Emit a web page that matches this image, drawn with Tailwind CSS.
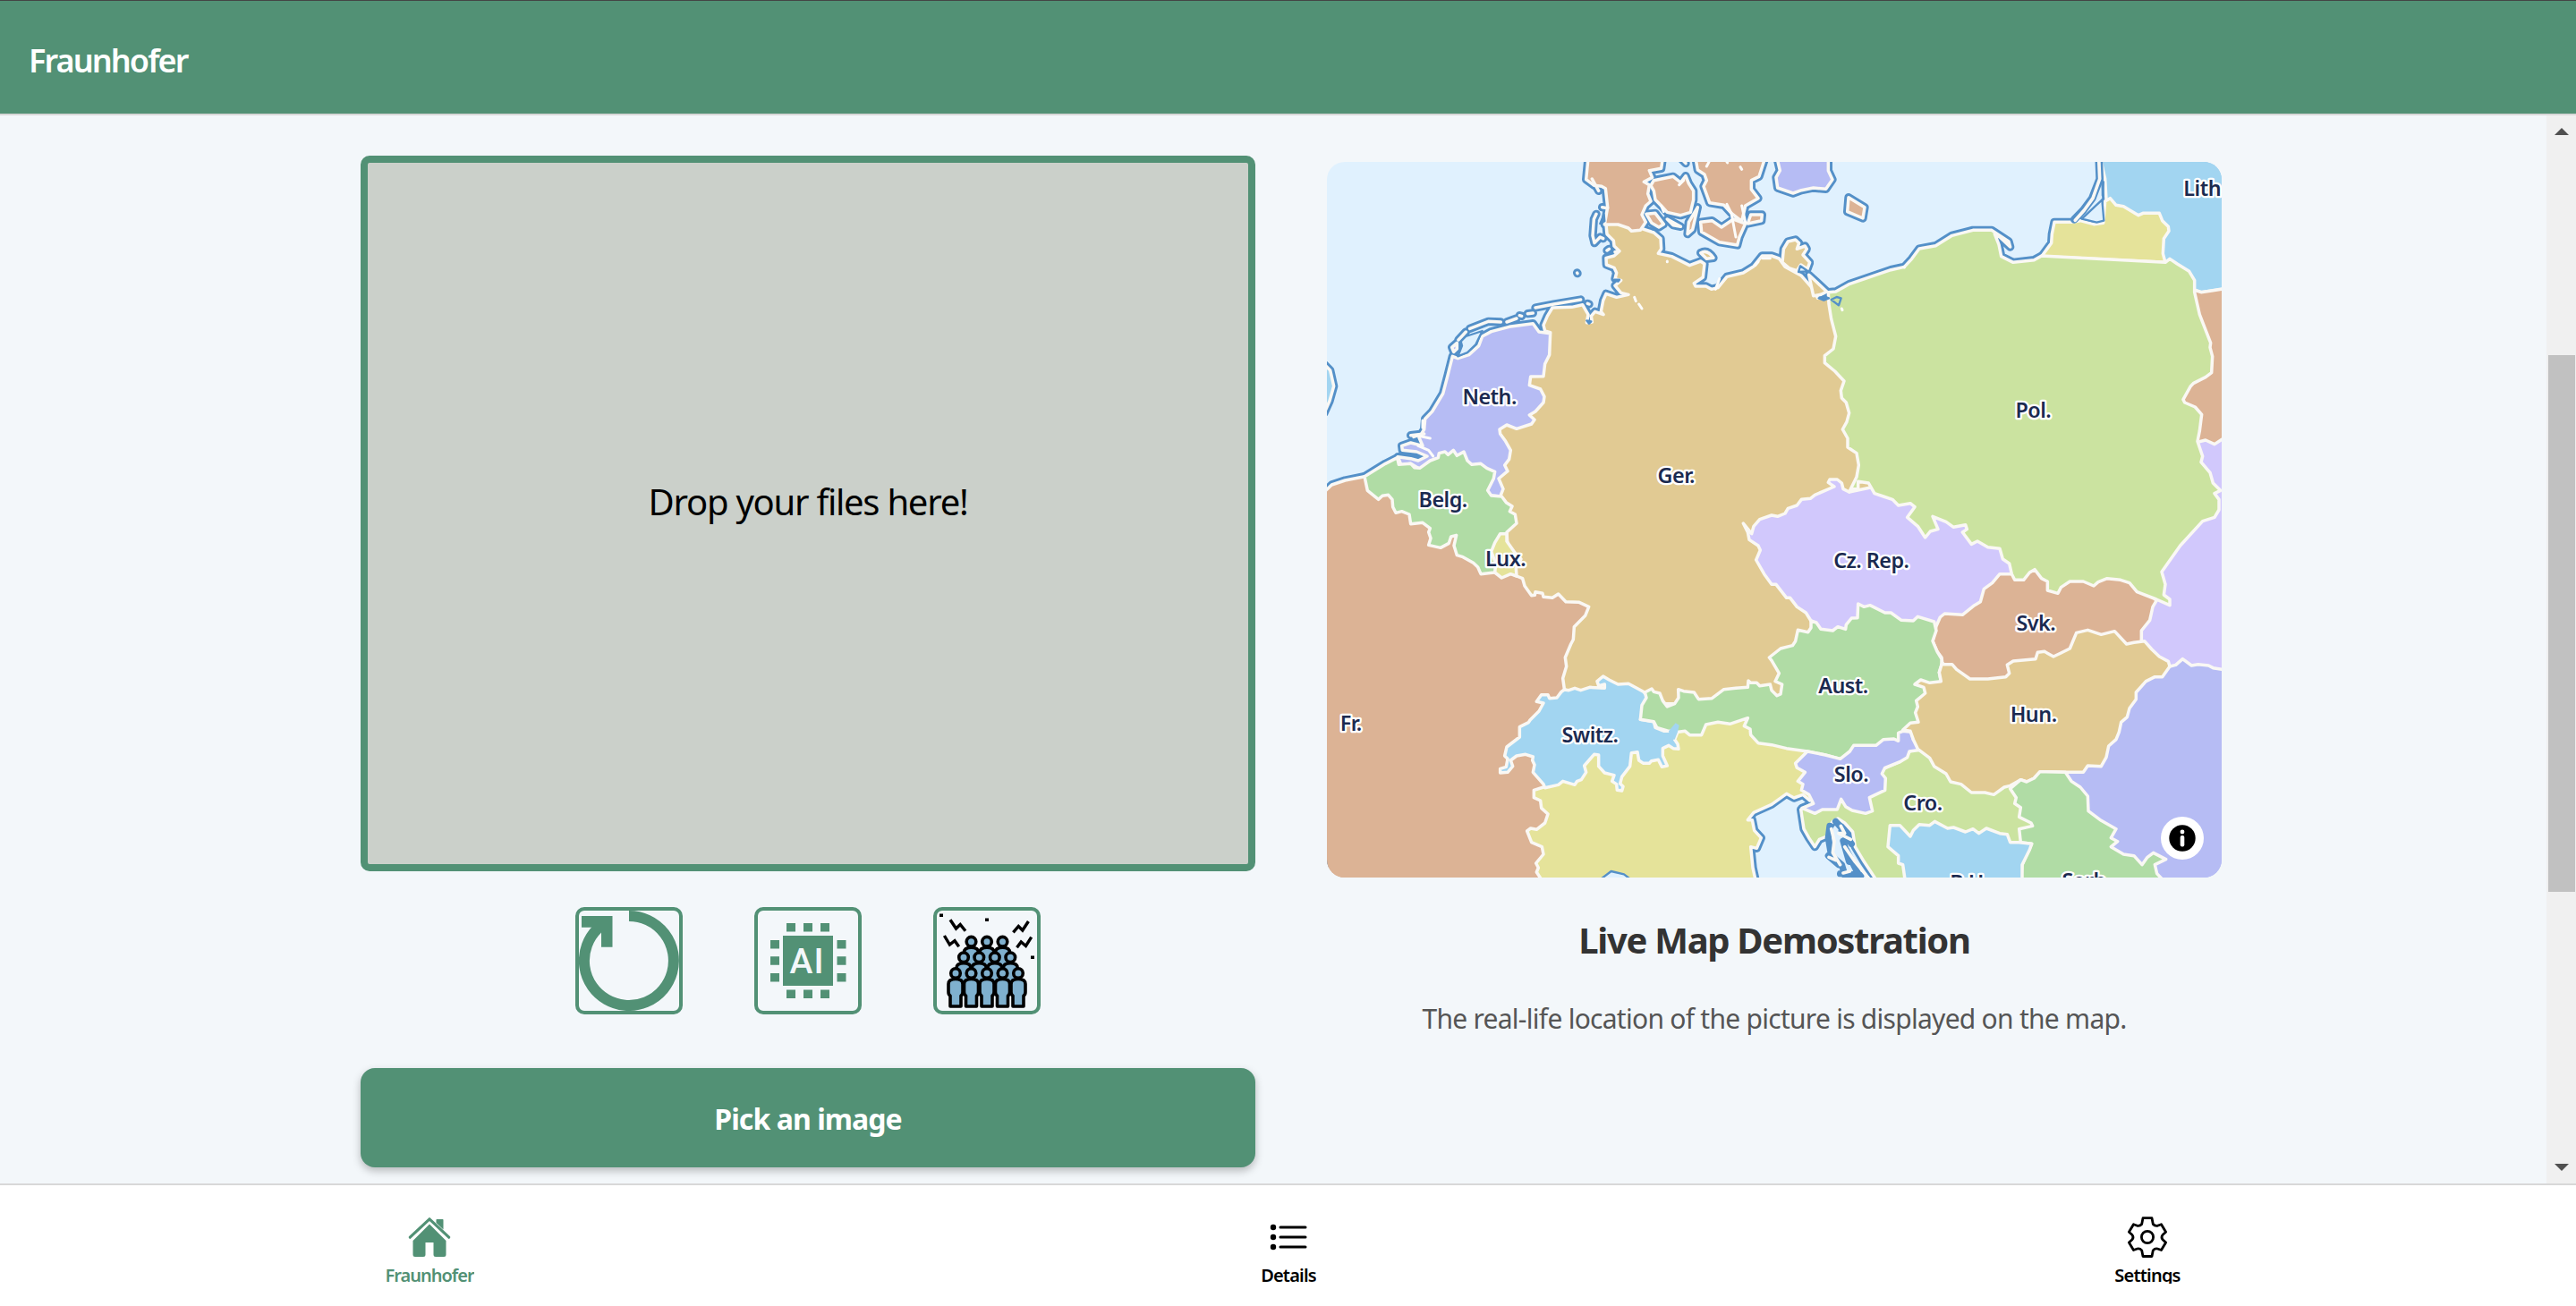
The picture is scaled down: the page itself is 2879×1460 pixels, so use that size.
<!DOCTYPE html>
<html lang="en">
<head>
<meta charset="utf-8">
<title>Fraunhofer</title>
<script src="https://cdn.jsdelivr.net/npm/@tailwindcss/browser@4"></script>
</head>
<body class="h-[1460px] w-full overflow-hidden flex flex-col bg-[#f3f7fa] font-['Noto_Sans','Open_Sans',sans-serif] text-black">

<header class="h-[129px] shrink-0 flex items-center bg-[#529175] border-t border-t-[#444] border-b-2 border-b-[#d8d8d8] pl-8 pt-2">
  <h1 class="text-[36px] leading-[48px] font-semibold text-white tracking-[-1.9px]">Fraunhofer</h1>
</header>

<main class="h-[1194px] shrink-0 flex overflow-hidden">
  <div class="flex-1 flex gap-20 pl-[403px]">
    <section class="w-[1000px] pt-[45px] flex flex-col">
      <div class="h-[800px] border-8 border-[#529175] rounded-[10px] bg-[#cbd0ca] flex items-center justify-center pb-[27px]">
        <p class="text-[40px] leading-[52px] tracking-[-1.25px]">Drop your files here!</p>
      </div>

      <div class="mt-10 flex justify-center gap-20">
        <button class="size-[120px] rounded-[10px] border-4 border-[#529175]">
          <svg class="size-28" viewBox="4 4 112 112" fill="none" aria-label="Reset">
            <path d="M60 10A50 50 0 1 1 24.6 24.6" stroke="#529175" stroke-width="12"/>
            <path d="M7 10H41.5V44.7H29V29L19 22.7H7Z" fill="#529175"/>
          </svg>
        </button>
        <button class="size-[120px] rounded-[10px] border-4 border-[#529175]">
          <svg class="size-28" viewBox="4 4 112 112" fill="#529175" aria-label="AI">
            <path d="M32 32h56v56H32zM36 18h10v9.5H36zM55 18h10v9.5H55zM74 18h10v9.5H74zM36 92.5h10v9.5H36zM55 92.5h10v9.5H55zM74 92.5h10v9.5H74zM18 37h10v9.5H18zM18 55.2h10v9.5H18zM18 74h10v9.5H18zM92.5 37h10v9.5h-10zM92.5 55.2h10v9.5h-10zM92.5 74h10v9.5h-10z"/>
            <text x="39.500" y="74" font-size="39" textLength="38" fill="#f3f7fa" font-weight="500" class="font-[Roboto]">AI</text>
          </svg>
        </button>
        <button class="size-[120px] rounded-[10px] border-4 border-[#529175]">
          <svg class="size-28" viewBox="4 4 112 112" aria-label="Crowd">
            <defs>
              <g id="person">
                <path d="M-8 12C-8 8-5 6.500 0 6.500S8 8 8 12V21Q8 24 6 25V37H-6V25Q-8 24-8 21Z"/>
                <circle r="5.300"/>
              </g>
            </defs>
            <g fill="#7fb0ce" stroke="#000" stroke-width="3.600" stroke-linejoin="round">
              <use href="#person" x="42.500" y="38.700"/><use href="#person" x="77.500" y="38.700"/><use href="#person" x="60" y="38.700"/>
              <use href="#person" x="34" y="56.300"/><use href="#person" x="86.300" y="56.300"/><use href="#person" x="51.300" y="56.300"/><use href="#person" x="68.800" y="56.300"/>
              <use href="#person" x="25" y="74"/><use href="#person" x="95" y="74"/><use href="#person" x="42.500" y="74"/><use href="#person" x="77.500" y="74"/><use href="#person" x="60" y="74"/>
            </g>
            <g fill="none" stroke="#000" stroke-width="3.400">
              <path d="M19 14.300L25.500 24L30.200 19.500L36 26.700M12.400 32L18.400 42L24 37.700L28.700 44.300M106.400 16L99.800 26L95.300 21.500L89.400 28.300M109.700 33.700L103.500 43.500L98.200 39L93.500 45.300"/>
            </g>
            <path d="M7 7.500h4v3.500H7zM58 12.500h4V16h-4zM109 54.500h4V58h-4z"/>
          </svg>
        </button>
      </div>

      <button class="mt-[60px] h-[111px] rounded-2xl bg-[#529175] pt-0.5 text-[32px] leading-[44px] font-bold text-white tracking-[-0.95px] shadow-[0_4px_10px_rgba(0,0,0,0.25)]">Pick an image</button>
    </section>

    <section class="w-[1000px] pt-[52px] flex flex-col">
      <div class="relative h-[800px] shrink-0 rounded-[20px] overflow-hidden bg-[#e0f1fe]">
        <svg class="block w-full h-full" viewBox="9 33 3000 2400" stroke-linejoin="round" stroke-linecap="round">
          <defs>
            <g id="lands">
              <!-- Germany -->
              <path fill="#e1ca93" d="M945 243L948 275L970 297L972 315L990 332L972 348L945 355L946 378L972 388L980 405L975 425L995 430L975 448L995 472L1020 478L980 487L945 475L935 498L928 535L936 545L908 535L895 550L898 570L880 572L885 545L866 512L830 520L765 522L748 550L735 580L740 600L758 605L600 700L500 1200L800 1850L1100 1900L1500 1900L1900 1700L1900 900L1690 492L1655 490L1635 455L1600 415L1545 385L1525 357L1500 348L1468 348L1440 383L1405 405L1350 418L1320 455L1298 460L1280 450L1245 450L1240 440L1270 420L1275 375L1262 366L1225 380L1165 350L1120 340L1130 325L1128 290L1105 270L1060 255L1000 235Z"/>
              <path fill="#e1ca93" d="M1262 338Q1285 325 1305 355L1282 358Z"/>
              <path fill="#e1ca93" d="M1536 370L1540 325L1555 300L1580 294L1592 305L1585 325L1612 315L1618 325L1605 345L1628 370L1620 392L1598 378L1585 398L1560 390Z"/>
              <path fill="#e1ca93" d="M1625 412L1650 435L1685 468L1665 478L1640 482Z"/>
              <!-- Denmark -->
              <path fill="#dcb395" d="M885 20L878 92L905 112L930 115L943 122L950 185L940 243L985 243L1020 255L1030 265L1060 262L1078 235L1065 210L1078 180L1095 165L1085 140L1090 110L1072 100L1100 85L1090 62L1130 55L1135 20Z"/>
              <path fill="#dcb395" d="M1105 95L1170 82L1195 102L1212 80L1222 105L1238 130L1238 160L1228 202L1195 212L1150 202L1132 182L1110 160L1105 130L1095 112Z"/>
              <path fill="#dcb395" d="M1245 20L1252 60L1275 75L1282 95L1272 115L1292 170L1340 178L1365 205L1400 232L1412 180L1455 155L1432 125L1432 95L1458 82L1478 20ZM1262 235L1300 230L1332 252L1372 225L1412 240L1392 285L1385 312L1325 302L1265 268ZM1430 210H1468L1466 230L1420 240ZM1080 208L1110 205L1138 242L1122 252L1098 238Z"/>
              <path fill="#dcb395" d="M1218 275L1222 235L1252 185L1235 260ZM1150 225L1195 250L1170 245ZM1195 20L1212 38L1208 20Z"/>
              <path fill="#dcb395" d="M1758 152L1812 185L1806 222L1754 200Z"/>
              <!-- Sweden, Great Britain -->
              <path fill="#b6bcf4" d="M1518 20L1528 62L1515 85L1520 120L1572 138L1600 128L1640 120L1682 124L1704 92L1690 62V20Z"/>
              <path fill="#a2d5f1" d="M0 712L20 732L32 785L18 835L0 875Z"/>
              <!-- France -->
              <path fill="#dcb395" d="M0 1140L25 1116L70 1101L135 1088L300 1150L600 1400L645 1422L665 1430L672 1455L695 1487L706 1486L708 1475L732 1480L735 1492L765 1495L785 1482L810 1508L855 1510L887 1525L875 1555L838 1592L835 1635L827 1650L808 1695L812 1725L800 1765L805 1800L900 1900V2140L800 2450H0Z"/>
              <!-- Italy -->
              <path fill="#e5e39a" d="M735 2130L703 2140V2165L725 2175L728 2200L750 2220L740 2250L712 2272L692 2268L680 2277L695 2315L730 2330L735 2355L710 2385L718 2400L712 2415L735 2450H1448L1437 2400L1430 2330L1450 2335L1465 2300L1442 2275L1435 2240L1420 2240L1440 2215L1500 2188L1550 2152L1575 2166L1605 2155L1628 2175L1700 2100L1650 1980L1400 1850H1000L850 2000Z"/>
              <!-- Switzerland -->
              <path transform="translate(0 1200)" fill="#a2d5f1" d="M805 603L795 610L780 630L755 632L750 620L728 620L712 643L735 648L720 675L690 705L685 713L655 728V762L612 795L605 825L615 835L610 862L590 868V882L615 880L632 860L625 840L645 825L675 820L700 828L698 840L705 855L700 880L735 920L740 932L785 922L800 910L840 922L848 910L862 905L878 880L872 858L905 820L920 822V860L940 882L972 890L965 910L980 920L982 940L998 942L1002 928L992 918L998 895L1025 860L1030 815L1050 812L1055 840L1070 850H1090L1097 842L1120 838L1132 862L1150 858L1135 825V800L1155 790L1170 800L1188 802L1185 785L1175 770L1185 745L1190 722L1178 715L1155 742L1140 742L1110 730L1105 710L1060 703L1100 640L1070 610L1020 583L985 585L955 570L935 558L915 575L920 590L940 585V598L890 595L860 605L840 598L820 605Z"/>
              <!-- Netherlands -->
              <path fill="#b6bcf4" d="M247 1022L290 1028L315 1035L345 1020L310 1005L262 1000L260 985L290 975L330 985L318 958L335 930L338 895L362 870L398 810L415 745L430 685L448 692L485 680L518 650L530 618L560 602L620 586L700 575L720 603L758 608L755 680L740 710L735 752L692 753L688 782L725 795L738 820L735 840L708 870L688 882L705 898L695 912L645 928L612 915L588 930L590 945L608 970L625 1000L620 1030L605 1050L615 1070L585 1095L600 1130L590 1155L540 1150L400 1100L315 1060L290 1045L258 1050Z"/>
              <path fill="#b6bcf4" d="M428 655L445 640V660L434 670Z"/>
              <g fill="none"><path d="M450 630L475 603M488 592L550 568L592 570M612 570L645 558M655 548L662 550M682 542L700 540M708 522L770 510L860 495M883 508L888 510M848 405L849 407M912 208L904 225L900 280L906 305L925 285L935 290M948 330L955 325M975 335L985 332M898 90L920 130M932 185L950 188M300 955L315 950M290 950L335 945"/></g>
              <!-- Belgium and Luxembourg -->
              <path fill="#b0dca5" d="M135 1088L205 1045L245 1025L250 1048L290 1045L302 1058L320 1060L355 1035L382 1025L385 1010L405 1005L415 1015L433 1000L445 1018L468 1005L480 1035L495 1048L525 1045L545 1060L572 1072L568 1095L548 1135L560 1152L595 1155L610 1175L630 1188L622 1205L640 1215L645 1245L612 1275L620 1400L570 1410L525 1415L515 1392L500 1378L465 1358L445 1352L435 1320L443 1285L425 1290L418 1312L390 1327L350 1318L357 1295L350 1275L355 1262L330 1243L290 1247L285 1215L260 1205L240 1210L230 1190L228 1165L215 1150L195 1153L182 1165L145 1135Z"/>
              <path fill="#e5e39a" d="M590 1280H612V1305L640 1345L660 1365L643 1395L645 1422L625 1415L595 1428L572 1410L575 1380L560 1340L572 1310Z"/>
              <!-- Lithuania, Belarus, Ukraine -->
              <g transform="translate(1500 0)">
                <path fill="#a2d5f1" d="M1102 20L1118 90L1122 160L1300 400L1425 465L1440 470L1475 465L1530 458V20Z"/>
                <path fill="#dcb395" d="M1400 462L1425 465L1440 470L1475 465L1530 456V1000H1300V700Z"/>
                <path fill="#d1c8fc" d="M1400 980L1455 966L1485 980L1530 950V1780H1200V1500Z"/>
              </g>
              <g transform="translate(1500 1200)">
                <!-- Romania -->
                <path fill="#b6bcf4" d="M1335 525L1355 520L1378 500L1408 522L1430 518L1465 522L1480 530L1530 538V1280H1000L950 870L1150 600L1200 500Z"/>
                <!-- Czech Republic -->
                <path fill="#d1c8fc" d="M-95 45L-80 75L-75 100L-45 120L-38 135L-52 168L-25 215L0 250H15L50 295H62L85 325L115 345L132 372L200 450H540L700 350L850 230L700 0L450 -100L260 -60L240 -70L235 -90L220 -102L195 -102L190 -92L210 -78L145 -50L130 -38L100 -35L85 -15L55 -5L45 12L20 22L0 18L-40 32L-60 55L-67 80Z"/>
                <!-- Slovakia -->
                <path fill="#dcb395" d="M552 390L565 360L580 348L640 352L680 320L700 308L712 265L740 245L765 215L805 215L900 150L1200 200L1290 305L1278 325L1268 370L1240 405V440L1200 600H650L572 512L570 495L555 475L540 440Z"/>
                <!-- Austria -->
                <path fill="#b0dca5" d="M132 372L150 378L165 400L205 405L222 392L248 400L250 385L268 363L288 362L290 315L310 325L330 320L380 345H400L435 370L475 372L490 358L545 375L552 405L540 440L555 475L570 500V520L562 545L568 575L700 650L425 900L230 835L180 822L120 810L50 800L0 788L-45 782L-70 755L-72 735L-92 725L-80 698L-140 718L-180 712L-220 720L-235 755L-275 755L-290 742L-312 745L-345 742L-385 730L-395 710L-440 703L-435 655L-420 630L-425 612L-402 600L-395 610L-375 615L-365 640L-350 660L-325 650L-312 630L-313 602L-295 608L-260 612L-245 635L-200 632L-160 602L-120 598L-80 595L-78 573L-70 580H-50L-40 590L-5 585L0 605L18 623L30 618L35 585L12 575L25 548L0 505L-8 495L30 465L70 455L80 440L88 403L122 410L132 395Z"/>
                <path fill="#a2d5f1" d="M-345 742L-322 715L-310 722L-315 745L-325 770L-340 770Z" stroke="none"/>
                <!-- Croatia -->
                <path fill="#cbe3a0" d="M98 1005L108 1070L125 1100L145 1130L160 1105L185 1095L192 1062L205 1045L222 1035L245 1050L272 1080L280 1130L310 1180L350 1240H480L900 1200V850L600 800L490 802L465 808L430 845L300 900Z"/>
                <!-- Slovenia -->
                <path fill="#b6bcf4" d="M120 810L80 850L85 865L112 880L88 910L105 920L100 940L125 955L140 985L102 1000L145 1018L170 1005L220 1005L233 970L248 995L270 1008L315 1018L338 1010L328 965L380 940L382 900L370 885L380 865L430 845L455 830L462 810L500 805L475 770L468 745L440 742L425 748V775L410 768L375 770L350 790L275 790L262 810L230 835L180 822Z"/>
              </g>
              <!-- Kaliningrad and Poland -->
              <path transform="translate(1500 0)" fill="#e5e39a" d="M905 350L938 305L940 275L948 235L1005 235L1035 230L1080 242L1112 238L1118 165L1135 155L1155 178L1180 182L1230 212L1245 205L1300 205L1310 230L1330 250L1332 265L1315 290L1312 340L1320 370Z"/>
              <path transform="translate(1500 0)" fill="#cbe3a0" d="M190 470L215 468L262 442L400 395L445 385L470 358L495 324L550 314L605 280L675 262L738 262L795 300L800 318L765 285L748 275L762 310L770 350L810 370L880 362L905 348L1320 370L1335 358L1360 375L1400 400L1418 430V470L1435 545L1472 640L1470 655L1478 685L1475 740L1455 755L1415 775L1405 785L1380 830L1385 840L1420 855L1442 880L1435 935L1428 970L1445 1020L1440 1040L1470 1075L1480 1110L1505 1135L1485 1145L1500 1165V1200L1485 1225L1445 1238L1370 1320L1308 1408L1320 1450L1315 1485L1335 1500V1520L1290 1500L1225 1475L1200 1445L1170 1435L1125 1430L1095 1442L1080 1455L1045 1440H1000L970 1460L960 1480L925 1470V1440L905 1430L882 1400L865 1410L845 1435L815 1435L805 1415L797 1380L775 1365L765 1330L725 1325L690 1305L670 1315L640 1275L655 1265L650 1250L610 1258L585 1240L540 1222L558 1265L532 1272L515 1293L490 1255L455 1225L480 1190L465 1178L425 1185L405 1165L375 1155L345 1145L325 1110L290 1105V1130H272L260 1140L285 1090L292 1050L285 1010L255 990V960L238 930L252 905L260 875L250 840L235 825L232 800L243 768L212 735L178 707V683L207 660L215 618L200 560L192 510Z"/>
              <g transform="translate(1500 1200)">
                <!-- Hungary -->
                <path fill="#e1ca93" d="M570 518L605 518L620 535L665 567L725 567L785 560L797 548L790 520L810 507L885 500L892 478L915 475L945 492L970 480L1000 465L1022 412L1060 403L1105 418L1150 407L1190 450L1215 445L1250 440L1275 468L1300 492L1330 508L1335 525L1310 560L1285 560L1255 575L1222 612V635L1200 665L1192 695L1172 712L1165 745L1155 770L1130 792L1122 830L1105 860L1060 858L1045 880L985 880L900 878L880 900L855 912L835 905L800 925L780 930L745 955L715 948L670 948L635 920L600 912L585 885L545 860L530 832L490 802L475 770L465 742L440 738L465 715L492 712L482 680L490 660L485 640L515 615L510 595L480 585L500 570L530 580L568 575L562 545Z"/>
                <!-- Serbia and Bosnia -->
                <path fill="#b0dca5" d="M985 880L1005 910L1035 930L1060 960L1062 1010L1105 1042L1155 1070L1138 1100L1160 1112L1138 1130L1180 1155L1215 1160L1242 1190L1260 1165L1280 1150L1322 1172L1285 1190L1292 1220L1330 1260H835L840 1190L872 1120L835 1115L830 1070L875 1060L870 1050L830 1030L835 998L815 985L820 965L800 935L835 905L855 912L880 900L900 878Z"/>
                <path fill="#a2d5f1" d="M397 1058H430L465 1095L475 1075L495 1055L530 1058L547 1045L590 1068L610 1065L650 1080L675 1070L695 1085L720 1068L765 1085L790 1088L800 1115L830 1115L872 1120L865 1140L840 1190V1260H450L440 1190L425 1185V1160L390 1130Z"/>
              </g>
            </g>
          </defs>

          <use href="#lands" stroke="#5490c8" stroke-width="28"/>
          <use href="#lands" stroke="#faf8f4" stroke-width="10.500"/>

          <!-- lagoons, gulfs and inland water -->
          <g fill="#5490c8" stroke="#5490c8" stroke-width="7">
            <path d="M1658 490L1675 484L1692 490L1675 497ZM880 565L895 568L888 575ZM972 428L990 428L985 434ZM925 240L940 232L938 210ZM1100 258L1115 262Z"/>
            <path fill="#cbe3a0" d="M1700 495L1718 486L1733 490L1725 514Z"/>
            <path fill="#e0f1fe" d="M1590 402L1596 382L1622 400Z"/>
            <path fill="#e0f1fe" d="M925 2440L962 2412L1005 2422L1035 2445ZM448 685L462 650L458 635L475 618L530 600L508 645L480 672Z"/>
            <path fill="#e0f1fe" d="M2540 224L2608 160L2614 230L2590 236Z"/>
          </g>
          <g fill="none">
            <path d="M2597 20L2600 90L2575 155L2545 195L2515 226" stroke="#5490c8" stroke-width="26"/>
            <path d="M2597 20L2600 90L2577 155L2548 195L2518 229" stroke="#faf8f4" stroke-width="11"/>
            <path d="M2612 100L2610 145" stroke="#5490c8" stroke-width="8"/>
          </g>
          <!-- Dalmatian islands -->
          <g transform="translate(1500 1200)" fill="none">
            <path d="M195 1060L190 1100L200 1160L235 1190L250 1240M215 1045L255 1090M235 1075L268 1120M250 1140L300 1240M190 1160L225 1190M230 1220L300 1225M240 1110L260 1180" stroke="#5490c8" stroke-width="22"/>
            <path d="M200 1070L210 1110L205 1150L230 1190M232 1060L245 1085L225 1085L265 1105M245 1130L280 1180L325 1235M192 1165L215 1175M240 1218L262 1212" stroke="#faf8f4" stroke-width="11"/>
          </g>
          <!-- small lakes and river mouths -->
          <path d="M1040 487L1045 500M1055 510L1065 525M1150 366V368M1325 425L1312 460M1445 380L1455 368M1470 356H1495M1290 33L1282 48M1350 33L1352 36M1395 50L1400 58M1350 175L1365 205L1380 285M1400 180L1412 235M1190 110L1205 95M1130 180L1138 200M330 900V925M310 950L355 960M315 985L350 1000L365 1020M1735 525L1737 530M1943 385L1945 387" fill="none" stroke="#fdfcfa" stroke-width="9"/>

          <g class="font-['Noto_Sans','Open_Sans',sans-serif]" font-size="70" font-weight="600" fill="#1b2a50" stroke="#fff" stroke-width="14" paint-order="stroke" text-anchor="middle" letter-spacing="-1.500">
            <text x="554" y="845">Neth.</text>
            <text x="1180" y="1109">Ger.</text>
            <text x="398" y="1192">Belg.</text>
            <text x="608" y="1388">Lux.</text>
            <text x="89" y="1940">Fr.</text>
            <text x="891" y="1980">Switz.</text>
            <text x="2377" y="890">Pol.</text>
            <text x="2881" y="148" text-anchor="start">Lith.</text>
            <text x="1834" y="1395">Cz. Rep.</text>
            <text x="2386" y="1604">Svk.</text>
            <text x="1740" y="1814">Aust.</text>
            <text x="2378" y="1911">Hun.</text>
            <text x="1767" y="2111">Slo.</text>
            <text x="2007" y="2208">Cro.</text>
            <text x="2163" y="2476">B.H.</text>
            <text x="2556" y="2468">Serb.</text>
          </g>
        </svg>
        <button class="absolute right-5 bottom-5 size-12 rounded-full bg-white flex items-center justify-center" aria-label="Attribution">
          <svg class="size-[30px]" viewBox="0 0 30 30">
            <circle cx="15" cy="15" r="14.700"/>
            <circle cx="15" cy="8" r="2.400" fill="#fff"/>
            <rect x="12.700" y="12" width="4.600" height="12.500" rx="2" fill="#fff"/>
          </svg>
        </button>
      </div>
      <h2 class="mt-[46px] text-center text-[40px] leading-[48px] font-bold text-[#333] tracking-[-1.3px]">Live Map Demostration</h2>
      <p class="mt-[44px] text-center text-[30px] leading-10 text-[#555] tracking-[-0.73px]">The real-life location of the picture is displayed on the map.</p>
    </section>
  </div>

  <div class="w-[33px] shrink-0 bg-[#f0f0f0] flex flex-col items-center">
    <svg class="mt-3.5 h-2 w-4 shrink-0" viewBox="0 0 16 8" fill="#505050"><path d="M8 0L16 8H0Z"/></svg>
    <div class="mt-[246px] h-[600px] w-[30px] shrink-0 bg-[#c1c1c1]"></div>
    <svg class="mt-auto mb-3.5 h-2 w-4 shrink-0" viewBox="0 0 16 8" fill="#505050"><path d="M8 8L16 0H0Z"/></svg>
  </div>
</main>

<nav class="-mr-px flex-1 grid grid-cols-3 border-t-2 border-[#d8d8d8] bg-white pt-[35px] text-[20px] font-semibold">
  <a class="flex flex-col items-center text-[#529175]">
    <svg class="h-[46px] w-[48px]" viewBox="0 0 48 46" fill="currentColor">
      <path d="M24 8.500L42.500 27V42.500Q42.500 45 40 45H31Q28.500 45 28.500 42.500V29H19.500V42.500Q19.500 45 17 45H8Q5.500 45 5.500 42.500V27Z"/>
      <path d="M31.500 5.500V3.700Q31.500 3 32.200 3H38.800Q39.500 3 39.500 3.700V14.500L31.500 7Z"/>
      <path d="M2.300 23.200L24 2.800L45.700 23.200" fill="none" stroke="currentColor" stroke-width="3.200" stroke-linecap="round" stroke-linejoin="round"/>
    </svg>
    <span class="mt-2 h-[21px] overflow-hidden leading-6 tracking-[-1px]">Fraunhofer</span>
  </a>
  <a class="flex flex-col items-center">
    <svg class="h-[46px] w-[48px]" viewBox="0 0 48 46">
      <g><circle cx="7" cy="12" r="3.200"/><circle cx="7" cy="23" r="3.200"/><circle cx="7" cy="34" r="3.200"/></g>
      <path d="M15 12H43M15 23H43M15 34H43" fill="none" stroke="#000" stroke-width="3" stroke-linecap="round"/>
    </svg>
    <span class="mt-2 h-[21px] overflow-hidden leading-6 tracking-[-0.8px]">Details</span>
  </a>
  <a class="flex flex-col items-center">
    <svg class="h-[46px] w-[48px]" viewBox="0 0 48 46" fill="none" stroke="#000" stroke-width="2.800" stroke-linejoin="round">
      <path d="M19 1.700H29L30.300 8.500Q32.500 11 35.300 10.300L39.500 8.700L44.600 17.300L41 20.500Q39 23 41 25.700L44.600 29L39.500 37.500L35.300 36Q32.500 35.300 30.300 37.800L29 44.500H19L17.700 37.800Q15.500 35.300 12.700 36L8.500 37.500L3.400 29L7 25.700Q9 23 7 20.500L3.400 17.300L8.500 8.700L12.700 10.300Q15.500 11 17.700 8.500Z"/>
      <circle cx="24" cy="23" r="6.600"/>
    </svg>
    <span class="mt-2 h-[21px] overflow-hidden leading-6 tracking-[-0.8px]">Settings</span>
  </a>
</nav>
</body>
</html>
